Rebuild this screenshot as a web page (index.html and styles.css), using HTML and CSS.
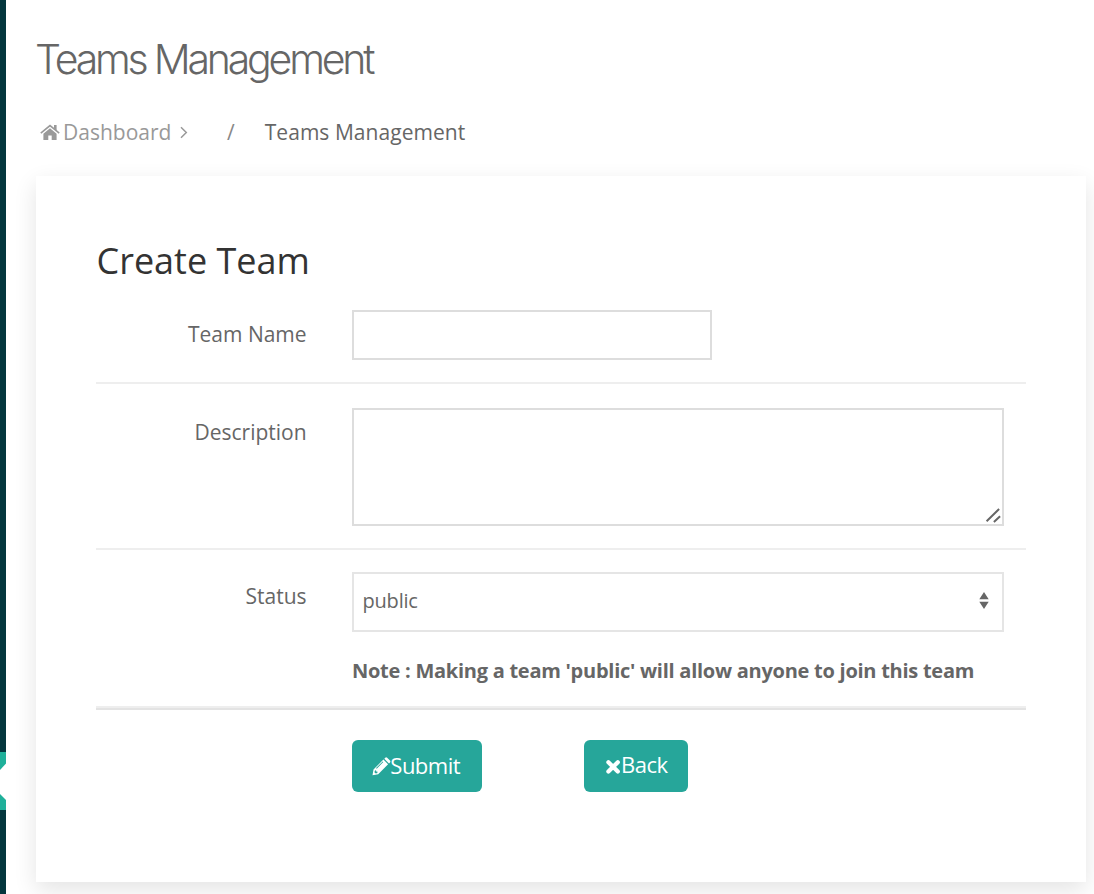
FILE: index.html
```html
<!DOCTYPE html>
<html lang="en">
<head>
<meta charset="utf-8">
<title>Teams Management</title>
<link rel="stylesheet" href="styles.css">
</head>
<body>
<div class="layout">
  <aside class="sidebar">
    <div class="active-item"><svg width="6" height="58" viewBox="0 0 6 58"><path d="M6 11.5L0 18V42L6 48Z" fill="#fff"/></svg></div>
  </aside>
  <main class="page">
    <h1 class="page-title">Teams Management</h1>
    <nav class="breadcrumb">
      <a class="crumb-link"><svg class="home" width="20" height="16" viewBox="0 0 20 16"><path d="M10 4.2L3.4 9.7V16H8.3V11.6H11.7V16H16.6V9.7Z"/><path d="M.8 9.2L10 1.6L19.2 9.2" fill="none" stroke="currentColor" stroke-width="1.6"/><path d="M14 1H16.6V7L14 4.8Z"/></svg><span class="crumb-name">Dashboard</span></a>
      <svg class="chevron" width="8" height="14" viewBox="0 0 8 14"><path d="M1 2.2L6.3 7.5L1 12.8" fill="none" stroke="currentColor" stroke-width="1.5"/></svg>
      <span class="slash">/</span>
      <span class="crumb-current">Teams Management</span>
    </nav>
    <section class="card">
      <h2 class="card-title">Create Team</h2>
      <form class="form">
        <div class="row row-name">
          <label class="label" for="name">Team Name</label>
          <input class="field field-name" id="name" type="text">
        </div>
        <div class="row row-description">
          <label class="label" for="description">Description</label>
          <div class="field area" id="description"><svg class="grip" width="16" height="16" viewBox="0 0 16 16"><path d="M1.6 14.3L14.1 2M8.9 15.1L15.1 9.3" fill="none" stroke="#666" stroke-width="2"/></svg></div>
        </div>
        <div class="row row-status">
          <span class="label">Status</span>
          <div class="status-col">
            <div class="field select"><span class="value">public</span><svg class="arrows" width="10" height="18" viewBox="0 0 10 18"><path d="M5 0L9.7 7.3H.3ZM.3 9.7H9.7L5 17Z" fill="#666"/></svg></div>
            <p class="note">Note : Making a team 'public' will allow anyone to join this team</p>
          </div>
        </div>
        <div class="actions">
          <button class="btn submit" type="button"><svg width="19" height="19" viewBox="0 0 19 19"><path fill-rule="evenodd" d="M.5 18.2L1.5 12.5L11.4 2.6L16.1 7.3L6.2 17.2ZM3 13.5L2.4 15.2L3.8 16.4L5.4 15.9V14.6H4.1V13.3ZM4.7 11.7L11.3 5.1L10.7 4.5L4.1 11.1Z"/><path d="M12.3 1.7L13.3.7Q14.2-.1 15.1.7L18 3.6Q18.8 4.5 18 5.4L17 6.4Z"/></svg><span class="btn-text">Submit</span></button>
          <button class="btn back" type="button"><svg width="16" height="15" viewBox="0 0 16 15"><path d="M3.4 3.2L12.8 12.6M12.8 3.2L3.4 12.6" stroke="currentColor" stroke-width="4.2" stroke-linecap="round"/></svg><span class="btn-text">Back</span></button>
        </div>
      </form>
    </section>
  </main>
</div>
</body>
</html>
```
FILE: styles.css
```css
* { box-sizing: border-box; }
body { margin: 0; background: #fff; color: #666; font-family: "Open Sans", sans-serif; font-size: 21px; }
h1, h2, p { margin: 0; font-weight: 400; }
svg { display: block; flex: none; fill: currentColor; }
.layout { display: flex; width: 1094px; height: 894px; overflow: hidden; }
.sidebar { width: 6px; flex: none; padding-top: 752px; background: #04363d; }
.active-item { height: 58px; background: #1fb09a; }
.page { flex: 1; padding: 33px 8px 0 30px; }
.page-title { height: 52px; margin-left: -1px; line-height: 52px; font-family: Inter, sans-serif; font-size: 41px; font-weight: 350; letter-spacing: -3.2px; white-space: nowrap; color: #666; }
.breadcrumb { display: flex; align-items: center; height: 30px; margin-top: 32px; padding-left: 4px; line-height: 30px; color: #999; white-space: nowrap; }
.crumb-link { display: flex; align-items: center; gap: 3px; width: 131px; }
.chevron { margin-left: 9px; }
.slash { margin-left: 39px; color: #888; }
.crumb-current { margin-left: 30px; color: #666; letter-spacing: .05px; }
.card { height: 706px; margin-top: 29px; padding: 60px 60px 0; background: #fff; box-shadow: 0 8px 22px rgba(0, 0, 0, .11); }
.card-title { height: 50px; padding-left: .5px; line-height: 50px; font-size: 36px; color: #333; }
.form { padding-top: 24px; }
.row { display: flex; gap: 45px; border-bottom: 2px solid #eee; }
.row-name { height: 74px; }
.row-description { height: 166px; padding-top: 24px; }
.row-status { height: 160px; padding-top: 22px; box-shadow: 0 -2px 0 #eee inset; border-color: #e3e3e3; }
.label { width: 211px; padding: 9px .4px 0 0; line-height: 30px; text-align: right; white-space: nowrap; }
.field { border: 2px solid #ddd; background: #fff; }
.field-name { width: 360px; height: 50px; outline: 0; }
.area { display: flex; align-items: flex-end; justify-content: flex-end; width: 652px; height: 118px; padding: 0 1px 1px; }
.status-col { width: 652px; }
.select { display: flex; align-items: center; justify-content: space-between; height: 60px; padding: 0 13px 3px 8.5px; border-color: #e5e5e5; font-size: 20px; letter-spacing: -.2px; }
.note { margin-top: 24px; line-height: 30px; font-size: 20px; font-weight: 700; letter-spacing: -.26px; white-space: nowrap; }
.actions { display: flex; gap: 102px; padding: 30px 0 0 256px; }
.btn { display: flex; align-items: center; height: 52px; padding: 0 0 0 20px; border: 0; border-radius: 6px; background: #26a69a; color: #fff; font: 22px "Open Sans", sans-serif; letter-spacing: -.5px; }
.submit { width: 130px; }
.submit .btn-text { margin-left: -.7px; padding-bottom: 3px; }
.back { width: 104px; padding-left: 21px; }
.back .btn-text { padding-bottom: 5px; }
```
